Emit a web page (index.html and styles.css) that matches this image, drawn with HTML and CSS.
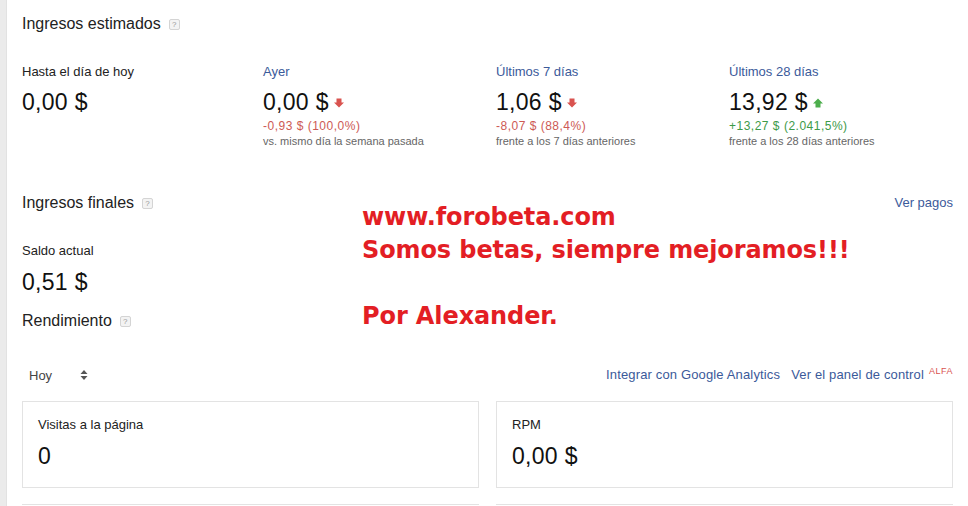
FILE: index.html
```html
<!DOCTYPE html>
<html lang="es">
<head>
<meta charset="utf-8">
<title>Ingresos</title>
<link rel="stylesheet" href="styles.css">
</head>
<body>
<div class="page">
  <div class="rail"></div>
  <main class="main">
    <h2 class="title">Ingresos estimados <span class="help">?</span></h2>
    <div class="stats">
      <div class="stat">
        <div class="label">Hasta el día de hoy</div>
        <div class="value">0,00 $</div>
      </div>
      <div class="stat">
        <div class="label link">Ayer</div>
        <div class="value">0,00 $ <svg class="arrow" viewBox="0 0 10 10" width="10" height="10"><path d="M2.5 0.5h5v4h2.5l-5 5l-5-5h2.5z" fill="#d9534f"/></svg></div>
        <div class="delta down">-0,93 $ (100,0%)</div>
        <div class="note">vs. mismo día la semana pasada</div>
      </div>
      <div class="stat">
        <div class="label link">Últimos 7 días</div>
        <div class="value">1,06 $ <svg class="arrow" viewBox="0 0 10 10" width="10" height="10"><path d="M2.5 0.5h5v4h2.5l-5 5l-5-5h2.5z" fill="#d9534f"/></svg></div>
        <div class="delta down">-8,07 $ (88,4%)</div>
        <div class="note">frente a los 7 días anteriores</div>
      </div>
      <div class="stat">
        <div class="label link">Últimos 28 días</div>
        <div class="value">13,92 $ <svg class="arrow" viewBox="0 0 10 10" width="10" height="10"><path d="M2.5 9.5h5v-4h2.5l-5-5l-5 5h2.5z" fill="#4cae4c"/></svg></div>
        <div class="delta up">+13,27 $ (2.041,5%)</div>
        <div class="note">frente a los 28 días anteriores</div>
      </div>
    </div>

    <div class="row-head">
      <h2 class="title">Ingresos finales <span class="help">?</span></h2>
      <a class="link small" href="#">Ver pagos</a>
    </div>
    <div class="label balance-label">Saldo actual</div>
    <div class="value">0,51 $</div>

    <h2 class="title perf">Rendimiento <span class="help">?</span></h2>

    <div class="toolbar">
      <div class="select">Hoy
        <svg class="updown" viewBox="0 0 8 12" width="8" height="12"><path d="M4 1l3.5 4h-7z M4 11l3.5-4h-7z" fill="#555"/></svg>
      </div>
      <div class="tools">
        <a class="link small wide" href="#">Integrar con Google Analytics</a>
        <a class="link small wide" href="#">Ver el panel de control</a><sup class="alfa">ALFA</sup>
      </div>
    </div>

    <div class="cards">
      <div class="card">
        <div class="label">Visitas a la página</div>
        <div class="value">0</div>
      </div>
      <div class="card">
        <div class="label">RPM</div>
        <div class="value">0,00 $</div>
      </div>
    </div>
    <div class="cards">
      <div class="card stub"></div>
      <div class="card stub"></div>
    </div>

    <div class="watermark">www.forobeta.com<br>Somos betas, siempre mejoramos!!!<br><br>Por Alexander.</div>
  </main>
</div>
</body>
</html>
```

FILE: styles.css
```css
html, body {
  margin: 0;
  padding: 0;
  background: #fff;
  height: 100%;
  overflow: hidden;
}
body {
  font-family: "Liberation Sans", Arial, sans-serif;
  color: #222;
}
.page {
  display: flex;
  height: 100%;
}
.rail {
  width: 6px;
  flex: none;
  background: #ebebeb;
  border-right: 1px solid #e2e2e2;
}
.main {
  position: relative;
  flex: 1;
  padding: 14px 15px 0 15px;
}
.title {
  margin: 0;
  font-size: 16px;
  line-height: 20px;
  font-weight: normal;
  color: #222;
  display: flex;
  align-items: center;
}
.help {
  display: inline-block;
  width: 9px;
  height: 9px;
  margin-left: 8px;
  border: 1px solid #d4d4d4;
  border-radius: 2px;
  background: #f3f3f3;
  color: #999;
  font-size: 8px;
  line-height: 9px;
  text-align: center;
}
.stats {
  display: grid;
  grid-template-columns: 241px 233px 233px 1fr;
  margin-top: 30px;
}
.label {
  font-size: 13px;
  line-height: 16px;
  color: #222;
}
.link {
  color: #3b5a9a;
  text-decoration: none;
}
.small {
  font-size: 13px;
  line-height: 16px;
}
.wide {
  letter-spacing: 0.15px;
}
.value {
  font-size: 23px;
  line-height: 26px;
  letter-spacing: 0.3px;
  margin-top: 9px;
  color: #111;
  display: flex;
  align-items: center;
}
.arrow {
  margin-left: 5px;
  margin-top: 2px;
}
.delta {
  font-size: 12px;
  line-height: 14px;
  letter-spacing: 0.5px;
  margin-top: 4px;
}
.down { color: #cd5a55; }
.up { color: #3d9a48; }
.note {
  font-size: 11px;
  line-height: 14px;
  margin-top: 1px;
  color: #666;
}
.row-head {
  display: flex;
  justify-content: space-between;
  align-items: center;
  margin-top: 45px;
}
.balance-label {
  margin-top: 30px;
}
.balance-label + .value {
  margin-top: 10px;
}
.perf {
  margin-top: 16px;
}
.toolbar {
  display: flex;
  justify-content: space-between;
  align-items: center;
  margin-top: 34px;
  height: 20px;
}
.select {
  display: flex;
  align-items: center;
  padding-left: 7px;
  font-size: 13px;
  color: #444;
}
.updown {
  margin-left: 28px;
}
.tools {
  display: flex;
  align-items: center;
  gap: 11px;
}
.alfa {
  font-size: 9px;
  color: #d9534f;
  margin-left: -6px;
  align-self: flex-start;
  line-height: 8px;
  letter-spacing: 0.5px;
}
.cards {
  display: grid;
  grid-template-columns: 1fr 1fr;
  gap: 17px;
  margin-top: 16px;
}
.card {
  border: 1px solid #e3e3e3;
  padding: 15px 15px 18px 15px;
}
.card .value {
  margin-top: 10px;
}
.stub {
  padding: 0;
  border-bottom: none;
  height: 0;
}
.watermark {
  position: absolute;
  left: 355px;
  top: 201px;
  font-family: "DejaVu Sans", Verdana, sans-serif;
  font-weight: bold;
  font-size: 24px;
  line-height: 33px;
  color: #e31e24;
  letter-spacing: -0.1px;
}
```
